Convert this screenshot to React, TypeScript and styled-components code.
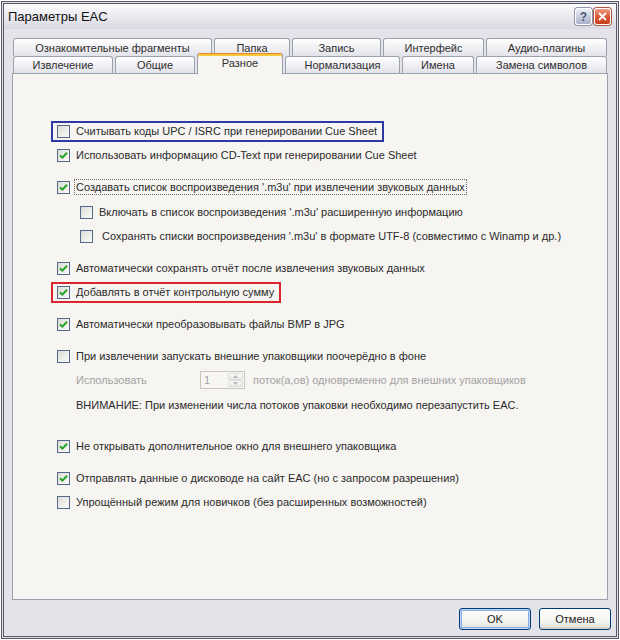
import styled, { createGlobalStyle } from "styled-components";

const GlobalStyle = createGlobalStyle`
  html, body {
    margin: 0;
    padding: 0;
    background: #ffffff;
  }
  body {
    font-family: "Liberation Sans", Tahoma, Arial, sans-serif;
    font-size: 11px;
    color: #2b2b2b;
  }
`;

const Window = styled.div`
  box-sizing: border-box;
  width: 618px;
  height: 638px;
  margin: 1px;
  border: 3px double #56566a;
  background: #e3e3e9;
  display: flex;
  flex-direction: column;
`;

const TitleBar = styled.div`
  height: 25px;
  flex-shrink: 0;
  display: flex;
  align-items: center;
  padding: 0 5px 0 4px;
  background: linear-gradient(#fcfcfd, #ececf1 45%, #d8d8e0);
`;

const Title = styled.span`
  font-size: 13px;
  color: #111;
`;

const CaptionButtons = styled.div`
  margin-left: auto;
  display: flex;
  gap: 2px;
`;

const CaptionButton = styled.div<{ $close?: boolean }>`
  box-sizing: border-box;
  width: 17px;
  height: 17px;
  border: 1px solid #fff;
  border-radius: 3px;
  box-shadow: 0 0 0 1px ${(p) => (p.$close ? "#b0553f" : "#8e94aa")};
  background: ${(p) =>
    p.$close
      ? "linear-gradient(#ee9b85, #dc5a39 50%, #c53d1c)"
      : "linear-gradient(#eef0f6, #c6cbdb 55%, #aab1c8)"};
  display: flex;
  align-items: center;
  justify-content: center;
  font-size: 12px;
  font-weight: bold;
  color: #4b5878;
`;

const Body = styled.div`
  flex: 1;
  display: flex;
  flex-direction: column;
  padding: 9px 8px 6px;
`;

const TabStrip = styled.div`
  display: flex;
  flex-direction: column;
`;

const TabRow = styled.div<{ $h: number }>`
  display: flex;
  align-items: flex-end;
  gap: 2px;
  height: ${(p) => p.$h}px;
  padding-left: 1px;
`;

const Tab = styled.div<{ $w: number; $active?: boolean }>`
  box-sizing: border-box;
  width: ${(p) => p.$w}px;
  height: 100%;
  border: 1px solid #9aa2ae;
  border-bottom: none;
  border-radius: 3px 3px 0 0;
  background: linear-gradient(#ffffff, #f1f1f5 50%, #e2e2ea);
  display: flex;
  align-items: center;
  justify-content: center;
  color: #2e2e2e;
  white-space: nowrap;

  ${(p) =>
    p.$active &&
    `
    position: relative;
    z-index: 2;
    height: 21px;
    margin-bottom: -1px;
    border-top: 1px solid #e68b2c;
    box-shadow: inset 0 2px #ffc83c;
    background: #f6f5f2;
    padding-bottom: 3px;
  `}
`;

const Panel = styled.div`
  flex: 1;
  border: 1px solid #9aa2ae;
  background: #f6f5f2;
  padding: 45px 0 0 44px;
  display: flex;
  flex-direction: column;
`;

const Row = styled.div<{ $top?: number; $indent?: number }>`
  height: 24px;
  margin-top: ${(p) => p.$top ?? 0}px;
  padding-left: ${(p) => p.$indent ?? 0}px;
  display: flex;
  align-items: center;
  white-space: nowrap;
`;

const Label = styled.label<{ $frame?: string }>`
  box-sizing: border-box;
  display: inline-flex;
  align-items: center;
  gap: 6px;
  height: 21px;
  margin-left: -6px;
  padding: 0 4px;
  border: 2px solid ${(p) => p.$frame ?? "transparent"};
`;

const Box = styled.span`
  box-sizing: border-box;
  width: 13px;
  height: 13px;
  flex-shrink: 0;
  border: 1px solid #53698e;
  background: linear-gradient(135deg, #dcdcd7, #fbfbf9);
  display: flex;
  align-items: center;
  justify-content: center;
`;

const Text = styled.span<{ $focus?: boolean; $muted?: boolean }>`
  color: ${(p) => (p.$muted ? "#a3a3a3" : "#2b2b2b")};
  line-height: 14px;
  padding: 0 1px;
  margin-left: -1px;
  outline: ${(p) => (p.$focus ? "1px dotted #6a6a6a" : "none")};
`;

const FieldLabel = styled.span`
  width: 124px;
  color: #a3a3a3;
`;

const Spin = styled.div`
  box-sizing: border-box;
  display: flex;
  width: 45px;
  height: 18px;
  margin-right: 8px;
  border: 1px solid #c9c7bc;
  background: #f7f6f2;
`;

const SpinValue = styled.span`
  flex: 1;
  padding-left: 3px;
  line-height: 16px;
  color: #a3a3a3;
`;

const SpinArrows = styled.div`
  width: 15px;
  display: flex;
  flex-direction: column;
  padding: 1px;
  gap: 0;
`;

const SpinArrow = styled.div`
  flex: 1;
  border: 1px solid #dedede;
  border-radius: 2px;
  background: linear-gradient(#fafafa, #e8e8e8);
  display: flex;
  align-items: center;
  justify-content: center;
`;

const ButtonRow = styled.div`
  display: flex;
  justify-content: flex-end;
  gap: 8px;
  margin-top: 8px;
  margin-right: -3px;
`;

const Button = styled.button<{ $default?: boolean }>`
  box-sizing: border-box;
  width: 72px;
  height: 22px;
  padding: 0;
  border: 1px solid #003c74;
  border-radius: 3px;
  background: linear-gradient(#ffffff, #f3f3ef 60%, #e2e2dc);
  box-shadow: ${(p) =>
    p.$default ? "inset 0 0 0 1px #bcd4f6, inset 0 0 0 2px #89ade4" : "inset 0 -2px #d6d0c5"};
  font-family: "Liberation Sans", Tahoma, Arial, sans-serif;
  font-size: 11px;
  color: #222;
`;

function Check({ on }: { on?: boolean }) {
  return (
    <Box>
      {on && (
        <svg width="9" height="9" viewBox="0 0 9 9">
          <path d="M1 4.2 L3.4 6.6 L8 1.8" fill="none" stroke="#23a523" strokeWidth="2" />
        </svg>
      )}
    </Box>
  );
}

function CheckRow({
  text,
  on,
  top,
  indent,
  frame,
  focus,
}: {
  text: string;
  on?: boolean;
  top?: number;
  indent?: number;
  frame?: string;
  focus?: boolean;
}) {
  return (
    <Row $top={top} $indent={indent}>
      <Label $frame={frame}>
        <Check on={on} />
        <Text $focus={focus}>{text}</Text>
      </Label>
    </Row>
  );
}

const topTabs = [
  { name: "Ознакомительные фрагменты", w: 199 },
  { name: "Папка", w: 76 },
  { name: "Запись", w: 89 },
  { name: "Интерфейс", w: 101 },
  { name: "Аудио-плагины", w: 121 },
];

const bottomTabs = [
  { name: "Извлечение", w: 100 },
  { name: "Общие", w: 80 },
  { name: "Разное", w: 86, active: true },
  { name: "Нормализация", w: 115 },
  { name: "Имена", w: 72 },
  { name: "Замена символов", w: 131 },
];

export default function App() {
  return (
    <>
      <GlobalStyle />
      <Window>
        <TitleBar>
          <Title>Параметры EAC</Title>
          <CaptionButtons>
            <CaptionButton>?</CaptionButton>
            <CaptionButton $close>
              <svg width="9" height="9" viewBox="0 0 9 9">
                <path d="M1 1 L8 8 M8 1 L1 8" stroke="#fff" strokeWidth="1.8" />
              </svg>
            </CaptionButton>
          </CaptionButtons>
        </TitleBar>
        <Body>
          <TabStrip>
            <TabRow $h={18}>
              {topTabs.map((t) => (
                <Tab key={t.name} $w={t.w}>
                  {t.name}
                </Tab>
              ))}
            </TabRow>
            <TabRow $h={17}>
              {bottomTabs.map((t) => (
                <Tab key={t.name} $w={t.w} $active={t.active}>
                  {t.name}
                </Tab>
              ))}
            </TabRow>
          </TabStrip>
          <Panel>
            <CheckRow text="Считывать коды UPC / ISRC при генерировании Cue Sheet" frame="#2d3aa6" />
            <CheckRow on text="Использовать информацию CD-Text при генерировании Cue Sheet" />
            <CheckRow
              on
              focus
              top={8}
              text="Создавать список воспроизведения '.m3u' при извлечении звуковых данных"
            />
            <CheckRow
              top={1}
              indent={23}
              text="Включать в список воспроизведения '.m3u' расширенную информацию"
            />
            <CheckRow
              indent={23}
              text={"\u00a0Сохранять списки воспроизведения '.m3u' в формате UTF-8 (совместимо с Winamp и др.)"}
            />
            <CheckRow on top={8} text="Автоматически сохранять отчёт после извлечения звуковых данных" />
            <CheckRow on frame="#d9262e" text="Добавлять в отчёт контрольную сумму" />
            <CheckRow on top={8} text="Автоматически преобразовывать файлы BMP в JPG" />
            <CheckRow top={8} text="При извлечении запускать внешние упаковщики поочерёдно в фоне" />
            <Row $indent={19}>
              <FieldLabel>Использовать</FieldLabel>
              <Spin>
                <SpinValue>1</SpinValue>
                <SpinArrows>
                  <SpinArrow>
                    <svg width="5" height="3" viewBox="0 0 5 3">
                      <path d="M0 3 L2.5 0 L5 3 Z" fill="#b8b8b8" />
                    </svg>
                  </SpinArrow>
                  <SpinArrow>
                    <svg width="5" height="3" viewBox="0 0 5 3">
                      <path d="M0 0 L2.5 3 L5 0 Z" fill="#b8b8b8" />
                    </svg>
                  </SpinArrow>
                </SpinArrows>
              </Spin>
              <Text $muted>поток(а,ов) одновременно для внешних упаковщиков</Text>
            </Row>
            <Row $top={1} $indent={19}>
              <Text>ВНИМАНИЕ: При изменении числа потоков упаковки необходимо перезапустить EAC.</Text>
            </Row>
            <CheckRow on top={17} text="Не открывать дополнительное окно для внешнего упаковщика" />
            <CheckRow on top={8} text="Отправлять данные о дисководе на сайт EAC (но с запросом разрешения)" />
            <CheckRow text="Упрощённый режим для новичков (без расширенных возможностей)" />
          </Panel>
          <ButtonRow>
            <Button $default>OK</Button>
            <Button>Отмена</Button>
          </ButtonRow>
        </Body>
      </Window>
    </>
  );
}
